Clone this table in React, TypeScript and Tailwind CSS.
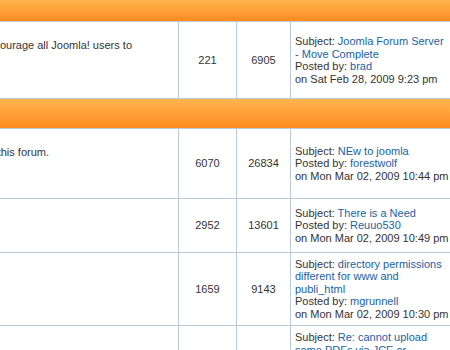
import React from "react";

const B = "border-[#b9cadb]";

function Bar({ h }: { h: string }) {
  return <div className={`${h} w-full bg-gradient-to-b from-[#ffb54c] to-[#fe8a1f]`} />;
}

function Link({ children }: { children: React.ReactNode }) {
  return <span className="text-[#1b5fa2]">{children}</span>;
}

type Row = {
  h: string;
  lead: string;
  leadPr: string;
  topics: string;
  posts: string;
  subject: string;
  by: string;
  date: string;
  top?: boolean;
};

const rows1: Row[] = [
  {
    h: "h-[77px]",
    lead: "Please read this first. We encourage all Joomla! users to",
    leadPr: "pr-[46px]",
    topics: "221",
    posts: "6905",
    subject: "Joomla Forum Server - Move Complete",
    by: "brad",
    date: "on Sat Feb 28, 2009 9:23 pm",
  },
];

const rows2: Row[] = [
  {
    h: "h-[70px]",
    lead: "in this forum.",
    leadPr: "pr-[129px]",
    topics: "6070",
    posts: "26834",
    subject: "NEw to joomla",
    by: "forestwolf",
    date: "on Mon Mar 02, 2009 10:44 pm",
  },
  {
    h: "h-[54px]",
    lead: "",
    leadPr: "",
    topics: "2952",
    posts: "13601",
    subject: "There is a Need",
    by: "Reuuo530",
    date: "on Mon Mar 02, 2009 10:49 pm",
  },
  {
    h: "h-[73px]",
    lead: "",
    leadPr: "",
    topics: "1659",
    posts: "9143",
    subject: "directory permissions different for www and publi_html",
    by: "mgrunnell",
    date: "on Mon Mar 02, 2009 10:30 pm",
  },
  {
    h: "h-[80px]",
    lead: "",
    leadPr: "",
    topics: "",
    posts: "",
    subject: "Re: cannot upload some PDFs via JCE or FCKeditor",
    by: "tobias",
    date: "on Mon Mar 02, 2009 10:20 pm",
    top: true,
  },
];

function ForumRow({ r }: { r: Row }) {
  return (
    <div className={`flex border-b ${B} ${r.h}`}>
      <div className={`w-[178px] shrink-0 overflow-hidden flex justify-end pt-[17px] ${r.leadPr}`}>
        <span className="whitespace-nowrap">{r.lead}</span>
      </div>
      <div className={`w-[58px] shrink-0 border-l ${B} flex items-center justify-center`}>{r.topics}</div>
      <div className={`w-[54px] shrink-0 border-l ${B} flex items-center justify-center`}>{r.posts}</div>
      <div
        className={`w-[170px] shrink-0 border-l ${B} pl-[4px] flex ${
          r.top ? "items-start pt-[5px]" : "items-center"
        }`}
      >
        <div className="w-[152px]">
          <div>
            Subject: <Link>{r.subject}</Link>
          </div>
          <div className="whitespace-nowrap">
            Posted by: <Link>{r.by}</Link>
          </div>
          <div className="whitespace-nowrap">{r.date}</div>
        </div>
      </div>
    </div>
  );
}

export default function App() {
  return (
    <div className="w-[450px] h-[350px] overflow-hidden bg-white text-[11px] leading-[12.5px] text-[#333333] font-['Liberation_Sans',Arial,sans-serif]">
      <Bar h="h-[21px]" />
      <div className={`border-t ${B}`}>
        {rows1.map((r, i) => (
          <ForumRow key={i} r={r} />
        ))}
      </div>
      <Bar h="h-[29px]" />
      <div className={`border-t ${B}`}>
        {rows2.map((r, i) => (
          <ForumRow key={i} r={r} />
        ))}
      </div>
    </div>
  );
}
